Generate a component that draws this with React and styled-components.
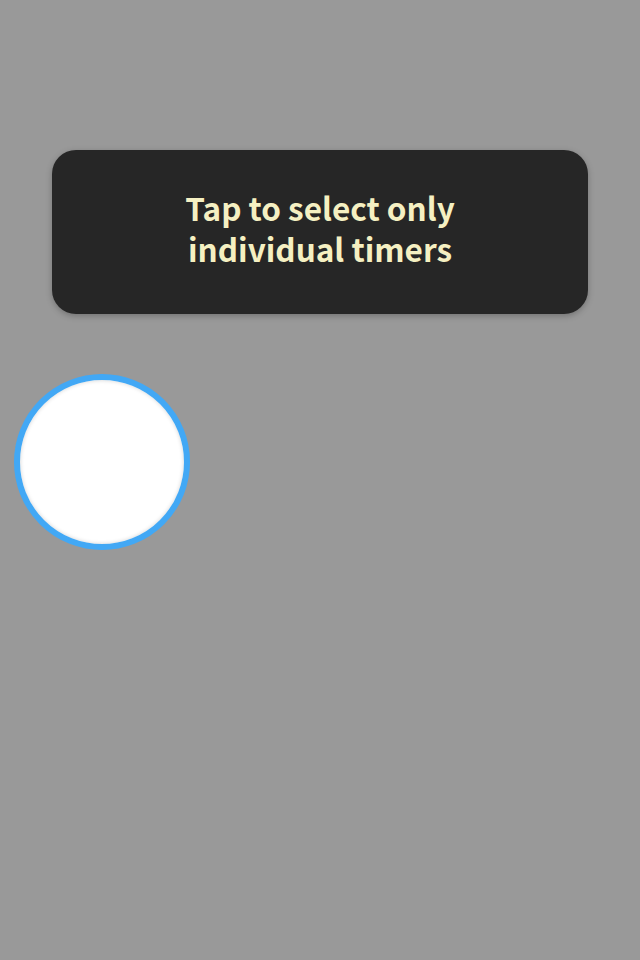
import React from 'react'
import styled, { createGlobalStyle } from 'styled-components'

const GlobalStyle = createGlobalStyle`
  html, body {
    margin: 0;
    padding: 0;
    background: #999999;
  }
  body {
    font-family: "Noto Sans CJK SC", "Noto Sans", sans-serif;
  }
`

const Screen = styled.main`
  width: 640px;
  height: 960px;
  background: #999999;
  display: flex;
  flex-direction: column;
  align-items: flex-start;
  overflow: hidden;
`

const Tip = styled.div`
  box-sizing: border-box;
  margin: 150px 0 0 52px;
  width: 536px;
  height: 164px;
  padding-bottom: 9px;
  border-radius: 24px;
  background: #262626;
  box-shadow: 0 2px 6px rgba(0, 0, 0, 0.25);
  display: flex;
  align-items: center;
  justify-content: center;
  text-align: center;
`

const TipText = styled.p`
  margin: 0;
  color: #f5f0c2;
  font-size: 31.5px;
  font-weight: 700;
  line-height: 41px;
`

const Spot = styled.div`
  box-sizing: border-box;
  margin: 60px 0 0 14px;
  width: 176px;
  height: 176px;
  border-radius: 50%;
  border: 6px solid #42a8f5;
  background: #ffffff;
  box-shadow: inset 0 0 4px rgba(0, 0, 0, 0.18);
`

const App = () => {
  return (
    <>
      <GlobalStyle />
      <Screen>
        <Tip>
          <TipText>
            Tap to select only
            <br />
            individual timers
          </TipText>
        </Tip>
        <Spot />
      </Screen>
    </>
  )
}

export default App
